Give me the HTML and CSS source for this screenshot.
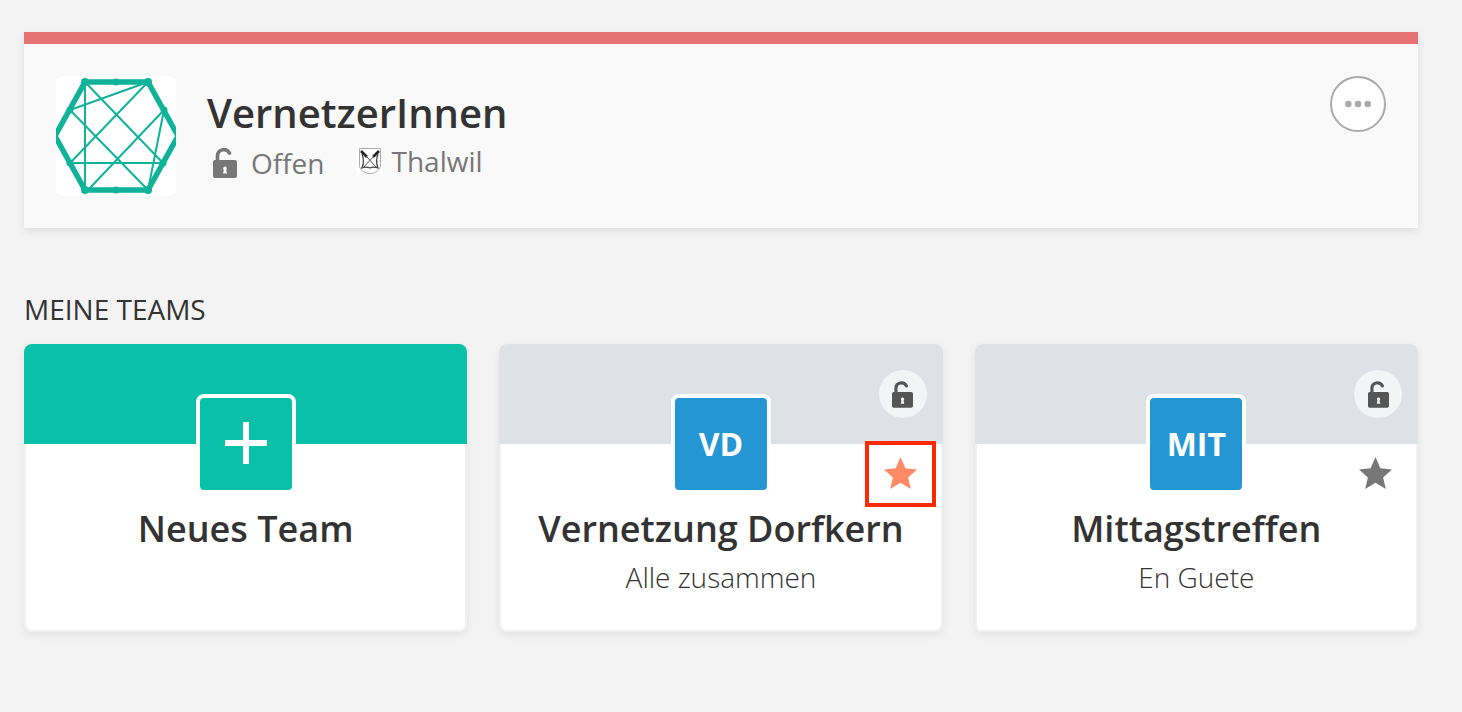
FILE: index.html
```html
<!DOCTYPE html>
<html lang="de">
<head>
<meta charset="utf-8">
<meta name="viewport" content="width=device-width, initial-scale=1">
<title>VernetzerInnen</title>
<link rel="stylesheet" href="styles.css">
</head>
<body>
<svg class="sprite" aria-hidden="true">
  <symbol id="lock" viewBox="0 0 24 30">
    <path d="M4.500 14V8.100A6.300 6.300 0 0 1 16.400 5.100" fill="none" stroke="currentColor" stroke-width="3.600" stroke-linecap="round"/>
    <path fill="currentColor" fill-rule="evenodd" d="M2 12h20a2 2 0 0 1 2 2v14a2 2 0 0 1-2 2H2a2 2 0 0 1-2-2V14a2 2 0 0 1 2-2zM12 18.500a2 2 0 0 0-1.200 3.500L10 25.500h4L13.200 22A2 2 0 0 0 12 18.500z"/>
  </symbol>
  <symbol id="star" viewBox="0 0 32 31">
    <path fill="currentColor" d="M16 0l4.700 10.800L32 12l-8.600 7.800L26 31l-10-6L6 31l2.600-11.200L0 12l11.300-1.200z"/>
  </symbol>
</svg>
<main class="page">
  <header class="group">
    <svg class="group-logo" viewBox="0 0 120 120" role="img" aria-label="VernetzerInnen Logo">
      <g fill="none" stroke="#10b39a">
        <path stroke-width="5.500" d="M29 6h63l30 54-30 54H29L-1 60z"/>
        <path stroke-width="2" d="M29 6v108M29 6l78 81M92 6L14 34M92 6L14 87M14 34l78 80M108 34l-76 80M108 34L92 114M14 87h93"/>
      </g>
      <g fill="#10b39a">
        <circle cx="29" cy="6" r="4"/><circle cx="60" cy="6" r="3.500"/><circle cx="92" cy="6" r="4"/>
        <circle cx="14" cy="34" r="3.500"/><circle cx="108" cy="34" r="3.500"/>
        <circle cx="14" cy="87" r="3.500"/><circle cx="107" cy="87" r="3.500"/>
        <circle cx="29" cy="114" r="4"/><circle cx="60" cy="114" r="3.500"/><circle cx="92" cy="114" r="4"/>
      </g>
    </svg>
    <div class="group-info">
      <h1 class="group-title">VernetzerInnen</h1>
      <div class="group-meta">
        <span class="meta-status"><svg class="meta-lock" aria-hidden="true"><use href="#lock"/></svg>Offen</span>
        <span class="meta-place">
          <svg class="crest" viewBox="0 0 26 26" aria-hidden="true">
            <path fill="#fff" d="M0 0h26v26H0z"/>
            <path fill="none" stroke="#aaa" d="M2.500 .5h21V17c0 5-5 8.500-10.500 8.500S2.500 22 2.500 17z"/>
            <path stroke="#222" stroke-width="2.600" d="M4 3l6 6M22 3l-6 6"/>
            <path fill="none" stroke="#555" d="M9 8l11 12M17 8L6 20"/>
            <path fill="none" stroke="#444" stroke-width="1.300" d="M5 6c2 5 2 9 0 14 3-1 6-1 8 0 2-1 5-1 8 0-2-5-2-9 0-14"/>
          </svg>Thalwil</span>
      </div>
    </div>
    <button class="more" type="button" aria-label="Mehr">
      <svg class="more-dots" viewBox="0 0 26 8" aria-hidden="true"><circle cx="3.300" cy="4" r="3.300"/><circle cx="13" cy="4" r="3.300"/><circle cx="22.700" cy="4" r="3.300"/></svg>
    </button>
  </header>

  <h2 class="section-title">MEINE TEAMS</h2>
  <section class="teams">
    <article class="card card-new">
      <div class="card-banner"></div>
      <div class="card-body">
        <button class="tile" type="button" aria-label="Neues Team erstellen">
          <svg class="plus" viewBox="0 0 42 42" aria-hidden="true"><path d="M21 0v42M0 21h42" stroke="#fff" stroke-width="6"/></svg>
        </button>
        <h3 class="card-title">Neues Team</h3>
      </div>
    </article>
    <article class="card">
      <div class="card-banner"><span class="badge"><svg class="badge-lock" aria-hidden="true"><use href="#lock"/></svg></span></div>
      <div class="card-body">
        <div class="tile">VD</div>
        <h3 class="card-title">Vernetzung Dorfkern</h3>
        <p class="card-text">Alle zusammen</p>
      </div>
      <button class="favorite favorite-on" type="button" aria-label="Favorit" aria-pressed="true"><svg class="star" aria-hidden="true"><use href="#star"/></svg></button>
    </article>
    <article class="card">
      <div class="card-banner"><span class="badge"><svg class="badge-lock" aria-hidden="true"><use href="#lock"/></svg></span></div>
      <div class="card-body">
        <div class="tile">MIT</div>
        <h3 class="card-title">Mittagstreffen</h3>
        <p class="card-text">En Guete</p>
      </div>
      <button class="favorite" type="button" aria-label="Favorit" aria-pressed="false"><svg class="star" aria-hidden="true"><use href="#star"/></svg></button>
    </article>
  </section>
</main>
</body>
</html>
```

FILE: styles.css
```css
* { box-sizing: border-box; }
body {
  margin: 0;
  background: #f3f3f3;
  color: #333;
  font-family: "Open Sans", "Noto Sans", sans-serif;
}
h1, h2, h3, p { margin: 0; }
button { padding: 0; font: inherit; cursor: pointer; }
svg { display: block; flex: none; }
.sprite { display: none; }
.page { padding: 32px 44px 32px 24px; }

.group {
  display: flex;
  align-items: flex-start;
  gap: 31px;
  min-height: 196px;
  padding: 32px;
  border-top: 12px solid #e57373;
  background: #f9f9f9;
  box-shadow: 0 3px 8px rgba(0, 0, 0, 0.09);
}
.group-logo { width: 120px; height: 120px; border-radius: 8px; background: #fff; }
.group-info { flex: 1; padding-top: 11px; }
.group-title { font-size: 40px; line-height: 52px; font-weight: 600; }
.group-meta {
  display: flex;
  align-items: flex-start;
  gap: 32px;
  color: #777;
  font-size: 28px;
  line-height: 40px;
}
.meta-status, .meta-place { display: flex; align-items: center; }
.meta-status { gap: 14px; padding: 4px 0 0 6px; }
.meta-place { gap: 9px; padding-top: 2px; }
.meta-lock { width: 24px; height: 30px; }
.crest { width: 26px; height: 26px; }
.more {
  display: flex;
  align-items: center;
  justify-content: center;
  width: 56px;
  height: 56px;
  border: 2px solid #aaa;
  border-radius: 50%;
  background: #fff;
}
.more-dots { width: 26px; height: 8px; fill: #aaa; }

.section-title { padding: 61px 0 15px; font-size: 28px; line-height: 40px; font-weight: 400; }
.teams { display: grid; grid-template-columns: repeat(3, 1fr); gap: 32px; }
.card {
  position: relative;
  display: flex;
  flex-direction: column;
  border-radius: 8px;
  background: #fff;
  box-shadow: 0 3px 8px rgba(0, 0, 0, 0.07);
}
.card-banner {
  display: flex;
  justify-content: flex-end;
  height: 100px;
  padding: 26px 16px;
  border-radius: 8px 8px 0 0;
  background: #dee1e6;
}
.card-new .card-banner { background: #09c1a8; }
.card-body {
  flex: 1;
  display: flex;
  flex-direction: column;
  align-items: center;
  padding-bottom: 33px;
  border: 2px solid #f0f0f0;
  border-top: 0;
  border-radius: 0 0 8px 8px;
}
.tile {
  display: flex;
  align-items: center;
  justify-content: center;
  width: 100px;
  height: 100px;
  margin-top: -50px;
  padding-bottom: 2px;
  border: 4px solid #fff;
  border-radius: 8px;
  background: #2496d4;
  color: #fff;
  font-size: 32px;
  font-weight: 700;
}
.card-new .tile { background: #09c1a8; }
.plus { width: 42px; height: 42px; }
.card-title { padding-top: 11px; font-size: 36px; line-height: 48px; font-weight: 600; text-align: center; }
.card-text { padding-top: 4px; font-size: 28px; line-height: 40px; font-weight: 300; }
.badge {
  display: flex;
  align-items: center;
  justify-content: center;
  width: 48px;
  height: 48px;
  border-radius: 50%;
  background: #f3f4f6;
  color: #555;
}
.badge-lock { width: 21px; height: 27px; }
.favorite {
  position: absolute;
  top: 97px;
  right: 7px;
  display: flex;
  align-items: center;
  justify-content: center;
  width: 71px;
  height: 66px;
  padding-bottom: 2px;
  border: 4px solid transparent;
  background: none;
  color: #777;
}
.favorite-on { border-color: #ff2a00; color: #ff8a65; }
.star { width: 33px; height: 32px; }
```
